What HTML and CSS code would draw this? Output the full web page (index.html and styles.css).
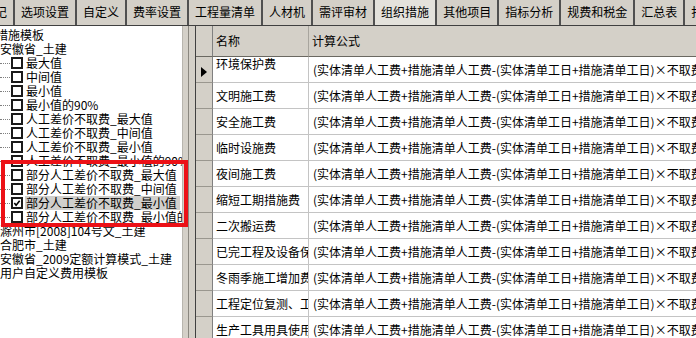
FILE: index.html
```html
<!DOCTYPE html>
<html lang="zh-CN">
<head>
  <meta charset="UTF-8" />
  <title>组织措施</title>
  <link rel="stylesheet" href="styles.css">
</head>
<body>
  <div class="tabs">
    <div class="tab tab-first">记</div>
    <div class="tab">选项设置</div>
    <div class="tab">自定义</div>
    <div class="tab">费率设置</div>
    <div class="tab">工程量清单</div>
    <div class="tab">人材机</div>
    <div class="tab">需评审材</div>
    <div class="tab active">组织措施</div>
    <div class="tab">其他项目</div>
    <div class="tab">指标分析</div>
    <div class="tab">规费和税金</div>
    <div class="tab">汇总表</div>
    <div class="tab">打印</div>
  </div>

  <div class="main">
    <ul class="tree">
      <li class="node node-root">措施模板</li>
      <li class="node">安徽省_土建</li>
      <li class="leaf"><span class="box"></span><span class="label">最大值</span></li>
      <li class="leaf"><span class="box"></span><span class="label">中间值</span></li>
      <li class="leaf"><span class="box"></span><span class="label">最小值</span></li>
      <li class="leaf"><span class="box"></span><span class="label">最小值的90%</span></li>
      <li class="leaf"><span class="box"></span><span class="label">人工差价不取费_最大值</span></li>
      <li class="leaf"><span class="box"></span><span class="label">人工差价不取费_中间值</span></li>
      <li class="leaf"><span class="box"></span><span class="label">人工差价不取费_最小值</span></li>
      <li class="leaf"><span class="box"></span><span class="label">人工差价不取费_最小值的90%</span></li>
      <li class="leaf"><span class="box"></span><span class="label">部分人工差价不取费_最大值</span></li>
      <li class="leaf"><span class="box"></span><span class="label">部分人工差价不取费_中间值</span></li>
      <li class="leaf sel">
        <span class="box"><svg width="9" height="9" viewBox="0 0 9 9"><path d="M1.5 4 L3.5 6.5 L7.5 1.5" fill="none" stroke="#000" stroke-width="1.8"/></svg></span><span class="label">部分人工差价不取费_最小值</span>
      </li>
      <li class="leaf"><span class="box"></span><span class="label">部分人工差价不取费_最小值的90%</span></li>
      <li class="node">滁州市[2008]104号文_土建</li>
      <li class="node">合肥市_土建</li>
      <li class="node">安徽省_2009定额计算模式_土建</li>
      <li class="node">用户自定义费用模板</li>
    </ul>

    <div class="splitter"></div>

    <div class="grid">
      <table>
        <colgroup>
          <col class="c-ind">
          <col class="c-name">
          <col class="c-formula">
        </colgroup>
        <thead>
          <tr>
            <th class="ind"></th>
            <th>名称</th>
            <th>计算公式</th>
          </tr>
        </thead>
        <tbody>
          <tr class="current">
            <td class="ind"><span class="arrow"></span></td>
            <td class="name">环境保护费</td>
            <td class="formula">(实体清单人工费+措施清单人工费-(实体清单工日+措施清单工日)×不取费人工差价)×费率</td>
          </tr>
          <tr>
            <td class="ind"></td>
            <td class="name">文明施工费</td>
            <td class="formula">(实体清单人工费+措施清单人工费-(实体清单工日+措施清单工日)×不取费人工差价)×费率</td>
          </tr>
          <tr>
            <td class="ind"></td>
            <td class="name">安全施工费</td>
            <td class="formula">(实体清单人工费+措施清单人工费-(实体清单工日+措施清单工日)×不取费人工差价)×费率</td>
          </tr>
          <tr>
            <td class="ind"></td>
            <td class="name">临时设施费</td>
            <td class="formula">(实体清单人工费+措施清单人工费-(实体清单工日+措施清单工日)×不取费人工差价)×费率</td>
          </tr>
          <tr>
            <td class="ind"></td>
            <td class="name">夜间施工费</td>
            <td class="formula">(实体清单人工费+措施清单人工费-(实体清单工日+措施清单工日)×不取费人工差价)×费率</td>
          </tr>
          <tr>
            <td class="ind"></td>
            <td class="name">缩短工期措施费</td>
            <td class="formula">(实体清单人工费+措施清单人工费-(实体清单工日+措施清单工日)×不取费人工差价)×费率</td>
          </tr>
          <tr>
            <td class="ind"></td>
            <td class="name">二次搬运费</td>
            <td class="formula">(实体清单人工费+措施清单人工费-(实体清单工日+措施清单工日)×不取费人工差价)×费率</td>
          </tr>
          <tr>
            <td class="ind"></td>
            <td class="name">已完工程及设备保护费</td>
            <td class="formula">(实体清单人工费+措施清单人工费-(实体清单工日+措施清单工日)×不取费人工差价)×费率</td>
          </tr>
          <tr>
            <td class="ind"></td>
            <td class="name">冬雨季施工增加费</td>
            <td class="formula">(实体清单人工费+措施清单人工费-(实体清单工日+措施清单工日)×不取费人工差价)×费率</td>
          </tr>
          <tr>
            <td class="ind"></td>
            <td class="name">工程定位复测、工程点交费</td>
            <td class="formula">(实体清单人工费+措施清单人工费-(实体清单工日+措施清单工日)×不取费人工差价)×费率</td>
          </tr>
          <tr>
            <td class="ind"></td>
            <td class="name">生产工具用具使用费</td>
            <td class="formula">(实体清单人工费+措施清单人工费-(实体清单工日+措施清单工日)×不取费人工差价)×费率</td>
          </tr>
        </tbody>
      </table>
    </div>

    <!-- red annotation frame over the tree -->
    <div class="mark"></div>
  </div>
</body>
</html>
```

FILE: styles.css
```css
html, body {
  margin: 0;
  width: 696px;
  height: 338px;
  overflow: hidden;
}
body {
  font-family: "Noto Sans CJK SC", "Noto Sans", sans-serif;
  font-size: 12px;
  color: #000;
  background: #d4d0c8;
}
/* Tab strip */
.tabs {
  display: flex;
  height: 25px;
  border-bottom: 1px solid #404040;
  overflow: hidden;
  white-space: nowrap;
  padding-left: 0;
}
.tab {
  flex: none;
  height: 25px;
  line-height: 24px;
  padding: 0 6px;
  border-right: 2px solid #505050;
}
.tab-first {
  margin-left: -11px;
}
.tab.active {
  background-color: #e4e2dc;
}
/* Main area */
.main {
  position: relative;
  display: flex;
  height: 312px;
}
.tree {
  list-style: none;
  margin: 0;
  padding: 2px 0 0;
  width: 182px;
  flex: none;
  background: #fff;
  overflow: hidden;
  white-space: nowrap;
}
.tree li {
  height: 14px;
  line-height: 14px;
}
.node-root {
  margin-left: -4px;
}
.leaf {
  display: flex;
  align-items: center;
}
.leaf::before {
  content: "";
  width: 10px;
  flex: none;
  border-top: 1px dotted #808080;
}
.box {
  flex: none;
  box-sizing: border-box;
  width: 12px;
  height: 12px;
  margin-left: 1px;
  border: 2px solid #1a1a1a;
  background: #fff;
  display: flex;
  align-items: center;
  justify-content: center;
}
.box svg {
  display: block;
}
.label {
  margin-left: 2px;
  padding: 0 1px;
}
.leaf.sel .label {
  background-color: #d0cfcc;
  padding-right: 3px;
}
.splitter {
  flex: none;
  box-sizing: border-box;
  width: 13px;
  background: #d4d0c8;
  border-left: 1px solid #b8b5ae;
  border-right: 6px solid #d4d0c8;
  box-shadow: inset -1px 0 0 #8a877f;
}
/* Grid */
.grid {
  flex: 1;
  overflow: hidden;
  border-left: 1px solid #404040;
}
table {
  border-collapse: separate;
  border-spacing: 0;
  table-layout: fixed;
  width: 640px;
}
.c-ind {
  width: 17px;
}
.c-name {
  width: 96px;
}
.c-formula {
  width: 527px;
}
thead tr {
  height: 31px;
}
tbody tr {
  height: 26px;
}
th {
  background-color: #d4d0c8;
  font-weight: normal;
  text-align: left;
  padding: 0 0 1px 3px;
  border-right: 1px solid #a8a59e;
  border-bottom: 1px solid #6a6861;
  white-space: nowrap;
}
th.ind {
  padding: 0;
  border-right: 1px solid #808080;
}
td {
  background: #fff;
  border-right: 1px solid #c4c4c4;
  border-bottom: 1px solid #c4c4c4;
  white-space: nowrap;
  overflow: hidden;
  padding: 0 0 1px 3px;
  vertical-align: middle;
}
td.ind {
  background-color: #d4d0c8;
  border-right: 1px solid #808080;
  border-bottom: 1px solid #9a978f;
  padding: 0;
  text-align: center;
}
td.formula {
  padding-left: 4px;
}
tr.current td.name {
  vertical-align: top;
  line-height: 14px;
}
.arrow {
  display: inline-block;
  width: 0;
  height: 0;
  border-left: 6px solid #000;
  border-top: 5px solid transparent;
  border-bottom: 5px solid transparent;
  vertical-align: middle;
}
/* Annotation */
.mark {
  position: absolute;
  left: 1px;
  top: 134px;
  width: 187px;
  height: 67px;
  box-sizing: border-box;
  border: 4px solid #ec1117;
}
```
